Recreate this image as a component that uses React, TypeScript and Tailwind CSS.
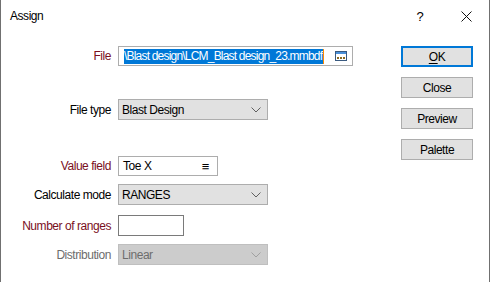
// Assign dialog — Windows-style form

const font = { fontFamily: '"Segoe UI", "Liberation Sans", Arial, sans-serif' };

function Chevron({ color = "#606060" }: { color?: string }) {
  return (
    <svg width="10" height="6" viewBox="0 0 10 6" className="shrink-0">
      <path d="M0.5 0.5 L5 5 L9.5 0.5" fill="none" stroke={color} strokeWidth="1" />
    </svg>
  );
}

function Label({ children, tone = "normal" }: { children: string; tone?: "normal" | "required" | "disabled" }) {
  const color =
    tone === "required" ? "text-[#7a0f1e]" : tone === "disabled" ? "text-[#6d6d6d]" : "text-black";
  return <div className={`w-[110px] shrink-0 whitespace-nowrap text-right ${color}`}>{children}</div>;
}

function Select({ value, disabled }: { value: string; disabled?: boolean }) {
  return (
    <div
      className={`ml-[7px] flex h-[21px] w-[150px] items-center justify-between border pl-[3px] pr-[6px] ${
        disabled ? "border-[#bfbfbf] bg-[#cccccc] text-[#6d6d6d]" : "border-[#adadad] bg-[#e1e1e1] text-black"
      }`}
    >
      <span>{value}</span>
      <Chevron color={disabled ? "#a0a0a0" : "#606060"} />
    </div>
  );
}

function Button({ children, primary }: { children: React.ReactNode; primary?: boolean }) {
  return (
    <button
      className={`flex h-[21px] w-[72px] items-center justify-center bg-[#e1e1e1] text-black ${
        primary ? "border-2 border-[#0078d7]" : "border border-[#adadad]"
      }`}
    >
      {children}
    </button>
  );
}

export default function App() {
  return (
    <div
      style={font}
      className="relative h-[282px] w-[490px] overflow-hidden border-r border-l border-[#707070] bg-white text-[12px] leading-none tracking-[-0.45px] text-black"
    >
      {/* Title bar */}
      <div className="flex h-[32px] items-center justify-between pl-[9px]">
        <span className="text-[12px]">Assign</span>
        <div className="flex items-center">
          <span className="w-[46px] text-center text-[13px]">?</span>
          <span className="flex w-[46px] justify-center">
            <svg width="11" height="11" viewBox="0 0 11 11">
              <path d="M0.5 0.5 L10.5 10.5 M10.5 0.5 L0.5 10.5" stroke="#111" strokeWidth="1" />
            </svg>
          </span>
        </div>
      </div>

      <div className="flex">
        {/* Form */}
        <div className="flex w-[400px] flex-col">
          <div className="mt-[14px] flex h-[20px] items-center">
            <Label tone="required">File</Label>
            <div className="ml-[7px] flex h-[20px] w-[235px] items-center overflow-hidden whitespace-nowrap border border-[#adadad] bg-white pl-[5px]">
              <span className="flex h-[15px] items-center bg-[#0078d7] pr-[1px] tracking-[-0.8px] text-white">
                {"\\Blast design\\LCM_Blast design_23.mmbdf"}
              </span>
              <span className="h-[15px] w-[1px] shrink-0 bg-[#ff8c00]" />
              <span className="ml-auto mr-[5px] flex shrink-0">
                <svg width="12" height="10" viewBox="0 0 12 10">
                  <rect x="0.5" y="0.5" width="11" height="9" fill="white" stroke="#3a5a80" />
                  <rect x="1" y="1" width="10" height="2" fill="#4a90d9" />
                  <rect x="2" y="6" width="2" height="2" fill="#8a6a20" />
                  <rect x="5" y="6" width="2" height="2" fill="#8a6a20" />
                  <rect x="8" y="6" width="2" height="2" fill="#8a6a20" />
                </svg>
              </span>
            </div>
          </div>

          <div className="mt-[33px] flex h-[21px] items-center">
            <Label>File type</Label>
            <Select value="Blast Design" />
          </div>

          <div className="mt-[36px] flex h-[20px] items-center">
            <Label tone="required">Value field</Label>
            <div className="ml-[7px] flex h-[20px] w-[100px] items-center justify-between border border-[#adadad] bg-white pl-[4px] pr-[8px]">
              <span>Toe X</span>
              <span className="text-[13px]">≡</span>
            </div>
          </div>

          <div className="mt-[8px] flex h-[21px] items-center">
            <Label>Calculate mode</Label>
            <Select value="RANGES" />
          </div>

          <div className="mt-[10px] flex h-[21px] items-center">
            <Label tone="required">Number of ranges</Label>
            <div className="ml-[7px] h-[21px] w-[66px] border border-[#7a7a7a] bg-white" />
          </div>

          <div className="mt-[8px] flex h-[21px] items-center">
            <Label tone="disabled">Distribution</Label>
            <Select value="Linear" disabled />
          </div>
        </div>

        {/* Buttons */}
        <div className="mt-[14px] flex flex-col gap-[10px]">
          <Button primary>
            <span className="underline underline-offset-2">O</span>K
          </Button>
          <Button>Close</Button>
          <Button>Preview</Button>
          <Button>Palette</Button>
        </div>
      </div>
    </div>
  );
}
